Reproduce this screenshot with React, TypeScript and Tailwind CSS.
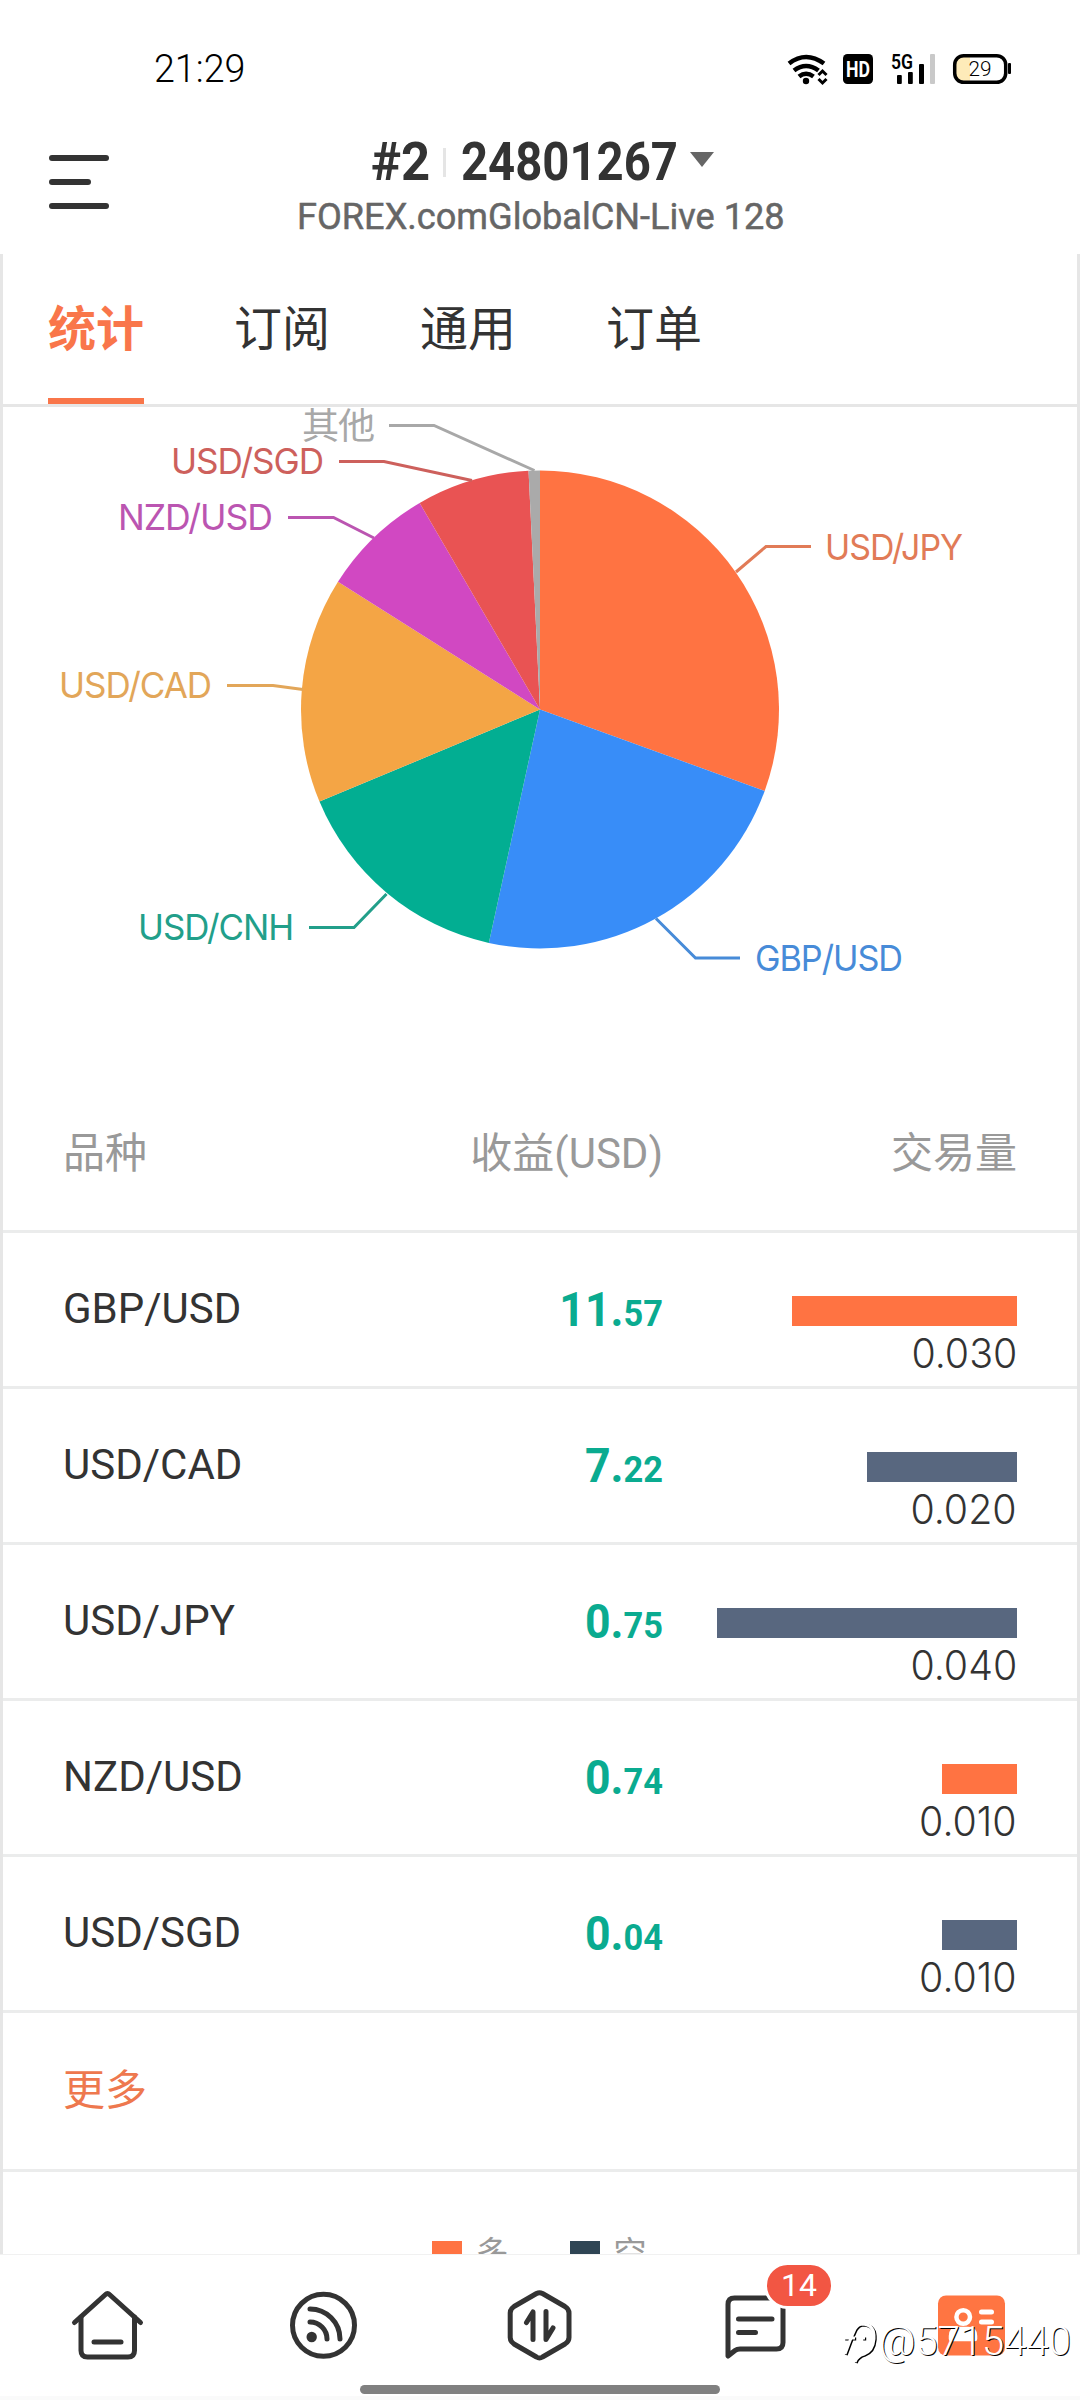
const tabs = ["统计", "订阅", "通用", "订单"];

const slices = [
  { name: "USD/JPY", value: 0.04, color: "#ff7342", ink: "#e17b57", line: "736,572 766,546.5 811,546.5", x: 825, y: 559.5, w: 137 },
  { name: "GBP/USD", value: 0.03, color: "#388df8", ink: "#478bd8", line: "656,918.5 695.5,958 740,958", x: 755, y: 971, w: 147 },
  { name: "USD/CNH", value: 0.02, color: "#02ae92", ink: "#229f8a", line: "386.5,894 354,927.5 309,927.5", x: 138, y: 940, w: 155 },
  { name: "USD/CAD", value: 0.02, color: "#f4a545", ink: "#e2a659", line: "303,689.5 273,685.5 227,685.5", x: 59, y: 698, w: 152 },
  { name: "NZD/USD", value: 0.01, color: "#d148c2", ink: "#bb55b1", line: "374,538 333.5,517.5 288,517.5", x: 118, y: 530, w: 154 },
  { name: "USD/SGD", value: 0.01, color: "#e95353", ink: "#cd605c", line: "472,480.5 384,461.5 339,461.5", x: 171, y: 474, w: 152 },
  { name: "其他", value: 0.001, color: "#aaaaaa", ink: "#a8a8a8", line: "534.5,470.5 434,425.5 389,425.5", x: 302, y: 439, w: 72 },
];

const rows = [
  { symbol: "GBP/USD", whole: "11.", cents: "57", volume: "0.030", bar: "w-[225px] bg-[#ff7342]" },
  { symbol: "USD/CAD", whole: "7.", cents: "22", volume: "0.020", bar: "w-[150px] bg-[#58677f]" },
  { symbol: "USD/JPY", whole: "0.", cents: "75", volume: "0.040", bar: "w-[300px] bg-[#58677f]" },
  { symbol: "NZD/USD", whole: "0.", cents: "74", volume: "0.010", bar: "w-[75px] bg-[#ff7342]" },
  { symbol: "USD/SGD", whole: "0.", cents: "04", volume: "0.010", bar: "w-[75px] bg-[#58677f]" },
];

const CX = 540;
const CY = 709.5;
const R = 239;

function point(angle: number) {
  return `${CX + R * Math.sin(angle)},${CY - R * Math.cos(angle)}`;
}

function StatusBar() {
  return (
    <div className="h-[110px] flex items-start justify-between pl-[154px] pr-[68px] pt-[47px] text-black">
      <div className="text-[38px] leading-[44px] font-[350] origin-left scale-x-[0.99]">21:29</div>
      <svg className="mt-[3px]" width="228" height="40" viewBox="784 50 228 40">
        <g fill="none" stroke="#000" strokeWidth="4.6">
          <path d="M789 63.5Q806 50.5 824 63.5" />
          <path d="M794 70.5Q806 61.5 818.5 70.5" />
          <path d="M799 76.5Q806 71 813.5 76.5" />
        </g>
        <circle cx="806" cy="81" r="3.2" />
        <path d="M818.5 75L822.5 71L826.5 75M818.5 79L822.5 83L826.5 79" fill="none" stroke="#000" strokeWidth="3" />
        <rect x="843" y="54" width="30" height="30" rx="4.5" />
        <text x="846" y="77" fill="#fff" fontSize="22" fontWeight="700" textLength="24" lengthAdjust="spacingAndGlyphs">HD</text>
        <text x="891" y="69" fontSize="20" fontWeight="600" textLength="22" lengthAdjust="spacingAndGlyphs">5G</text>
        <rect x="897" y="75" width="4.8" height="9" rx="1" />
        <rect x="908" y="72" width="4.8" height="12" rx="1" />
        <rect x="919" y="64" width="5" height="20" rx="1" />
        <rect x="930" y="54" width="5" height="30" rx="1" fill="#c9c9c9" />
        <path d="M970 56H962Q955 56 955 64V74Q955 82 962 82H970Z" fill="#feebb9" />
        <rect x="954.7" y="55.7" width="51" height="26.6" rx="9" fill="none" stroke="#000" strokeWidth="3.5" />
        <rect x="1008" y="63" width="3" height="11" rx="1" />
        <text x="968.5" y="76" fontSize="21" fontWeight="300" textLength="23" lengthAdjust="spacingAndGlyphs">29</text>
      </svg>
    </div>
  );
}

function Header() {
  return (
    <header className="h-36 grid grid-cols-[1fr_auto_1fr] items-start">
      <div className="pl-[49px] pt-[45px] flex flex-col gap-[18px]">
        <span className="w-[60px] h-[6px] rounded-full bg-[#333]" />
        <span className="w-[42px] h-[6px] rounded-full bg-[#333]" />
        <span className="w-[60px] h-[6px] rounded-full bg-[#333]" />
      </div>
      <div className="pt-[24px] flex flex-col items-center">
        <div className="flex items-center h-[56px] ml-[4px] text-[54px] leading-[56px] font-bold text-[#333]">
          <div className="w-[60px]">
            <div className="w-max origin-left scale-x-[0.94]">#2</div>
          </div>
          <div className="w-[3px] h-[29px] ml-[12px] mr-[15px] bg-[#e5e5e5]" />
          <div className="w-[216px]">
            <div className="w-max origin-left scale-x-[0.875]">24801267</div>
          </div>
          <svg className="ml-[13px] -mt-[4px]" width="24" height="16" viewBox="0 0 24 16">
            <path d="M0 0H24L12 15Z" fill="#666" />
          </svg>
        </div>
        <div className="h-[54px] w-[486px] text-[36.5px] leading-[54px] font-normal text-[#666] whitespace-nowrap [-webkit-text-stroke:0.5px_#666]">
          <div className="w-max origin-left scale-x-[0.99]">FOREX.comGlobalCN-Live 128</div>
        </div>
      </div>
      <div />
    </header>
  );
}

function PieChart() {
  const total = slices.reduce((sum, s) => sum + s.value, 0);
  let start = 0;

  return (
    <svg width="1074" height="669" viewBox="3 407 1074 669" className="block font-[Inter,'Noto_Sans_CJK_SC',sans-serif]">
      {slices.map((s) => {
        const end = start + (s.value / total) * Math.PI * 2;
        const d = `M${CX},${CY}L${point(start)}A${R},${R} 0 0 1 ${point(end)}Z`;
        start = end;
        return <path key={s.name} d={d} fill={s.color} />;
      })}
      {slices.map((s) => (
        <g key={s.name}>
          <polyline points={s.line} fill="none" stroke={s.ink} strokeWidth="3" />
          <text x={s.x} y={s.y} fill={s.ink} fontSize="36" textLength={s.w} lengthAdjust="spacingAndGlyphs" className="tracking-[-0.03em]">
            {s.name}
          </text>
        </g>
      ))}
    </svg>
  );
}

function SymbolTable() {
  return (
    <div>
      <div className="h-[157px] flex px-[60px] pt-[46px] text-[42px] leading-[64px] text-[#999] border-b-3 border-[#ebecec]">
        <div className="w-[240px]">品种</div>
        <div className="w-[360px] text-right">收益(USD)</div>
        <div className="flex-1 text-right">交易量</div>
      </div>
      {rows.map((row) => (
        <div key={row.symbol} className="h-[156px] flex px-[60px] border-b-3 border-[#ebecec] text-[#333]">
          <div className="w-[240px] pt-[43px] text-[42px] leading-[66px]">{row.symbol}</div>
          <div className="w-[360px] pt-[44px] text-right text-[48px] leading-[66px] font-bold text-[#0aab90] origin-right scale-x-[0.93]">
            {row.whole}
            <span className="text-[37px]">{row.cents}</span>
          </div>
          <div className="flex-1 flex flex-col items-end pt-[63px]">
            <div className={`h-[30px] ${row.bar}`} />
            <div className="mt-[2px] text-[41px] leading-[50px] font-[Inter,sans-serif] font-[350] origin-right scale-x-[0.96]">
              {row.volume}
            </div>
          </div>
        </div>
      ))}
      <div className="h-[159px] px-[60px] pt-[45px] text-[42px] leading-[66px] text-[#ee784e] border-b-3 border-[#ebecec]">
        更多
      </div>
    </div>
  );
}

function Legend() {
  return (
    <div className="h-[82px] overflow-hidden flex items-start justify-center gap-[30px] pr-[2px] pt-[58px] text-[33px] leading-[48px] text-[#999]">
      <div className="flex gap-[14px]">
        <span className="w-[30px] h-[21px] mt-[11px] bg-[#ff7342]" />
        <span className="w-[64px]">多</span>
      </div>
      <div className="flex gap-[14px]">
        <span className="w-[30px] h-[21px] mt-[11px] bg-[#2f4554]" />
        <span>空</span>
      </div>
    </div>
  );
}

function BottomNav() {
  return (
    <nav className="relative h-[146px] border-t border-[#f1f1f1] bg-white">
      <div className="h-[112px] pt-[28px] grid grid-cols-5 justify-items-center">
        <svg width="80" height="84" viewBox="68 2283 80 84" fill="none" stroke="#333" strokeWidth="5" strokeLinecap="round" strokeLinejoin="round">
          <path d="M74.5 2322.5L105.5 2294.5Q107.5 2292.5 109.5 2294.5L140.5 2322.5" />
          <path d="M81 2317V2350.5Q81 2357 87.5 2357H128Q134.5 2357 134.5 2350.5V2317" />
          <path d="M94 2342H121" />
        </svg>
        <svg width="80" height="84" viewBox="284 2283 80 84" fill="none" stroke="#333" strokeWidth="5" strokeLinecap="round">
          <circle cx="323.5" cy="2325.3" r="31" />
          <circle cx="311.7" cy="2337" r="5.2" fill="#333" stroke="none" />
          <path d="M310 2322A17 17 0 0 1 327 2339" />
          <path d="M310 2309A30 30 0 0 1 340 2339" />
        </svg>
        <svg width="80" height="84" viewBox="500 2283 80 84" fill="none" stroke="#333" strokeWidth="5" strokeLinecap="round" strokeLinejoin="round">
          <path d="M536.5 2293.5Q539.5 2292 542.5 2293.5L565 2306.5Q569 2309 569 2313V2337.5Q569 2341.5 565 2344L542.5 2357Q539.5 2359 536.5 2357L514 2344Q510.2 2341.5 510.2 2337.5V2313Q510.2 2309 514 2306.5Z" />
          <path d="M526.5 2322.5L533 2312V2339.5" />
          <path d="M546 2311.5V2339.5L553 2328" />
        </svg>
        <svg width="80" height="84" viewBox="716 2283 80 84" fill="none" stroke="#333" strokeWidth="5" strokeLinecap="round" strokeLinejoin="round">
          <path d="M728 2356V2304.5Q728 2298 734.5 2298H776.5Q783 2298 783 2304.5V2342.5Q783 2349 776.5 2349H740Q737 2349 735 2350.5Z" />
          <path d="M738.5 2319H772M738.5 2332.5H755.5" />
        </svg>
        <svg width="80" height="84" viewBox="932 2283 80 84">
          <rect x="938" y="2295.5" width="67" height="60" rx="8" fill="#ff7542" />
          <circle cx="963.2" cy="2317" r="6.8" fill="none" stroke="#fff" strokeWidth="4.5" />
          <path d="M951 2339V2336Q951 2329 958 2329H968Q975 2329 975 2336V2339Z" fill="#fff" stroke="#fff" strokeWidth="4.5" strokeLinejoin="round" />
          <path d="M981.5 2312H991.5M981.5 2322H991.5" stroke="#fff" strokeWidth="5" strokeLinecap="round" />
        </svg>
      </div>
      <div className="absolute left-[764px] top-[7px] w-[70px] h-[47px] rounded-full border-3 border-white bg-[#f25643] text-white text-[32px] leading-[41px] text-center">
        14
      </div>
      <div className="mx-auto mt-[18px] w-[360px] h-[9px] rounded-full bg-[#808080]" />
      <div className="absolute inset-x-0 bottom-0 h-[4px] bg-[#fafafa]" />
      <Watermark />
    </nav>
  );
}

function Watermark() {
  return (
    <div className="absolute left-[842px] top-[62px] flex items-center h-[50px] text-white">
      <svg width="37" height="44" viewBox="0 0 37 44" fill="none" strokeWidth="3">
        <path d="M3 34L9 18L13 9Q16 4 21 4M2 18H13M20 18H23M21 4Q33 5 32 19Q31 31 22 34Q15 36 13 42" stroke="#000" transform="translate(1.2 1)" />
        <path d="M3 34L9 18L13 9Q16 4 21 4M2 18H13M20 18H23M21 4Q33 5 32 19Q31 31 22 34Q15 36 13 42" stroke="#fff" />
      </svg>
      <span className="text-[40px] leading-[50px] font-light [text-shadow:1px_1px_0_#000]">@5715440</span>
    </div>
  );
}

export default function App() {
  return (
    <div className="w-[1080px] h-[2400px] overflow-hidden bg-white font-[Roboto,'Noto_Sans_CJK_SC',sans-serif]">
      <StatusBar />
      <Header />
      <main className="h-[2000px] border-x-3 border-[#e6e6e6] overflow-hidden">
        <div className="h-[153px] flex gap-[90px] pl-[45px] border-b-3 border-[#e6e6e6] text-[48px] leading-[72px] text-[#333]">
          {tabs.map((tab, index) => (
            <div
              key={tab}
              className={`w-24 pt-[40px] ${index === 0 ? "border-b-6 border-[#f9764a] text-[#f9764a] font-bold" : ""}`}
            >
              {tab}
            </div>
          ))}
        </div>
        <PieChart />
        <SymbolTable />
        <Legend />
      </main>
      <BottomNav />
    </div>
  );
}
